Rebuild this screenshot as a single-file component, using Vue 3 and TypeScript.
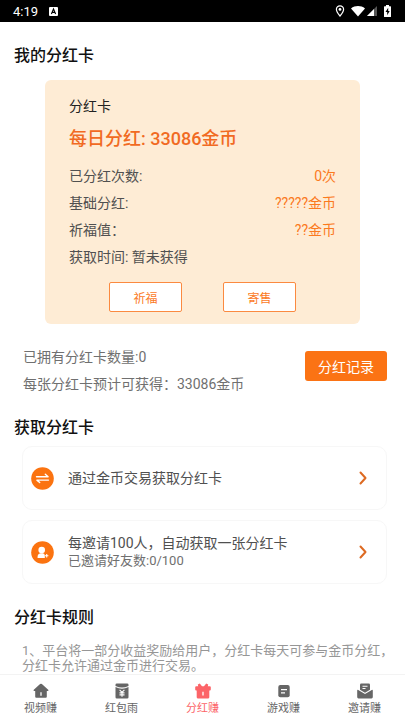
<script setup lang="ts">
import { ref } from 'vue'

interface CardRow {
  label: string
  value: string
}

interface Tab {
  id: string
  label: string
}

const rows: CardRow[] = [
  { label: '已分红次数:', value: '0次' },
  { label: '基础分红:', value: '?????金币' },
  { label: '祈福值：', value: '??金币' },
  { label: '获取时间: 暂未获得', value: '' },
]

const tabs: Tab[] = [
  { id: 'video', label: '视频赚' },
  { id: 'packet', label: '红包雨' },
  { id: 'bonus', label: '分红赚' },
  { id: 'game', label: '游戏赚' },
  { id: 'invite', label: '邀请赚' },
]

const activeTab = ref<string>('bonus')
</script>

<template>
  <div class="page">
    <header class="status">
      <span class="clock">4:19</span>
      <svg class="status-app" viewBox="0 0 9 9" width="9" height="9" aria-hidden="true">
        <rect width="9" height="9" rx="1" fill="#fff" />
        <path d="M2.4 7 4.5 2 6.6 7M3.2 5.4h2.6" fill="none" stroke="#000" stroke-width="1.1" />
      </svg>
      <div class="status-icons">
        <svg viewBox="0 0 10 12" width="10" height="12" aria-hidden="true">
          <path d="M5 .8C2.8.8 1.4 2.400 1.400 4.300 1.400 6.900 5 11 5 11s3.600-4.100 3.600-6.700C8.600 2.400 7.200.8 5 .8Z" fill="none" stroke="#fff" stroke-width="1.200" />
          <circle cx="5" cy="4.400" r="1.400" fill="#fff" />
        </svg>
        <svg class="wifi" viewBox="0 0 14 12" width="14" height="12" aria-hidden="true">
          <path d="M0 3.500C4 .3 10 .3 14 3.500L7 11.500Z" fill="#fff" />
        </svg>
        <svg class="signal" viewBox="0 0 10 10" width="10" height="10" aria-hidden="true">
          <path d="M10 0V10H0Z" fill="#555" />
          <path d="M7 3V10H0Z" fill="#fff" />
        </svg>
        <svg class="battery" viewBox="0 0 7 12" width="7" height="12" aria-hidden="true">
          <path d="M2 0h3v1.200h1.400q.6 0 .6.600v9.600q0 .6-.6.600H.6q-.6 0-.6-.6V1.800q0-.6.6-.6H2Z" fill="#fff" />
          <path d="M4.200 2.800 1.500 7h1.700v3.200L5.700 6H4.200Z" fill="#000" />
        </svg>
      </div>
    </header>

    <main class="content">
      <h2 class="heading">我的分红卡</h2>
      <section class="bonus-card">
        <h3 class="card-name">分红卡</h3>
        <p class="daily">每日分红: 33086金币</p>
        <div v-for="row in rows" :key="row.label" class="row">
          <span>{{ row.label }}</span>
          <span class="row-value">{{ row.value }}</span>
        </div>
        <div class="card-actions">
          <button type="button" class="outline-button">祈福</button>
          <button type="button" class="outline-button">寄售</button>
        </div>
      </section>

      <section class="summary">
        <div class="summary-text">
          <p>已拥有分红卡数量:0</p>
          <p>每张分红卡预计可获得：33086金币</p>
        </div>
        <button type="button" class="record-button">分红记录</button>
      </section>

      <h2 class="heading">获取分红卡</h2>
      <div class="ways">
        <a class="way" href="#trade">
          <svg class="way-icon" viewBox="0 0 23 23" width="23" height="23" aria-hidden="true">
            <circle cx="11.500" cy="11.500" r="11.300" fill="#fb7310" />
            <path d="M5.500 9.700h11.600L14.300 7.300M17.500 13.100H5.900l2.800 2.400" fill="none" stroke="#fff" stroke-width="1.400" stroke-linejoin="round" stroke-linecap="round" />
          </svg>
          <span class="way-text">
            <span class="way-title">通过金币交易获取分红卡</span>
          </span>
          <svg class="chevron" viewBox="0 0 8 14" width="8" height="14" aria-hidden="true">
            <path d="M1.500 1.500 6.500 7 1.500 12.500" fill="none" stroke="#dd6a22" stroke-width="2" stroke-linecap="round" stroke-linejoin="round" />
          </svg>
        </a>
        <a class="way" href="#invite">
          <svg class="way-icon" viewBox="0 0 23 23" width="23" height="23" aria-hidden="true">
            <circle cx="11.500" cy="11.500" r="11.300" fill="#fb7310" />
            <circle cx="10.700" cy="9" r="3.300" fill="#fff" />
            <path d="M7 17q-.5 0-.5-.6 0-3.800 3-4.200h2.400q1.900.3 1.900 2.300V17Z" fill="#fff" />
            <path d="M15.700 13v3.400M14 14.700h3.400" stroke="#fff" stroke-width="1.100" />
          </svg>
          <span class="way-text">
            <span class="way-title">每邀请100人，自动获取一张分红卡</span>
            <span class="way-note">已邀请好友数:0/100</span>
          </span>
          <svg class="chevron" viewBox="0 0 8 14" width="8" height="14" aria-hidden="true">
            <path d="M1.500 1.500 6.500 7 1.500 12.500" fill="none" stroke="#dd6a22" stroke-width="2" stroke-linecap="round" stroke-linejoin="round" />
          </svg>
        </a>
      </div>

      <h2 class="heading">分红卡规则</h2>
      <p class="rules">1、平台将一部分收益奖励给用户，分红卡每天可参与金币分红，分红卡允许通过金币进行交易。</p>
    </main>

    <nav class="tabs">
      <button
        v-for="tab in tabs"
        :key="tab.id"
        type="button"
        class="tab"
        :class="{ active: tab.id === activeTab }"
        @click="activeTab = tab.id"
      >
        <svg viewBox="0 0 16 16" width="16" height="16" aria-hidden="true">
          <template v-if="tab.id === 'video'">
            <path d="M8 .8q.5 0 .9.300l6.300 5.700q.5.500.1 1-.2.200-.7.200h-.8v5.800q0 1-1 1H3.200q-1 0-1-1V8h-.8q-.5 0-.7-.2-.4-.5.1-1l6.300-5.700q.4-.3.9-.3Z" fill="currentColor" />
            <path d="M8 9.300v3.500" stroke="#fff" stroke-width="1.300" />
          </template>
          <template v-else-if="tab.id === 'packet'">
            <path d="M2.800.5h10.400q1.300 0 1.300 1.300v1.100Q8 6.100 1.500 2.900V1.800Q1.500.5 2.800.5Z" fill="currentColor" />
            <path d="M1.500 4.100Q8 7.200 14.500 4.100v10.100q0 1.300-1.300 1.300H2.800q-1.300 0-1.300-1.300Z" fill="currentColor" />
            <path d="M5.600 6.800 8 9.300l2.400-2.500M5.500 9.900h5M5.500 11.900h5M8 9.300v4.400" fill="none" stroke="#fff" stroke-width="1.100" />
          </template>
          <template v-else-if="tab.id === 'bonus'">
            <path d="M1.200 3.300h2L2.800 1.400l2-1L7 3.300h2L11.200.4l2 1-.4 1.900h2q1 0 1 1v2.200q0 .9-.9.900h-.6v6.800q0 1.400-1.400 1.400H3.100q-1.400 0-1.400-1.400V7.400h-.6q-.9 0-.9-.9V4.300q0-1 1-1Z" fill="currentColor" />
            <path d="M8 8.800v3.700" fill="none" stroke="#fff" stroke-width="1.300" />
          </template>
          <template v-else-if="tab.id === 'game'">
            <rect x="2.300" y="2" width="11.400" height="12.300" rx="2" fill="currentColor" />
            <path d="M5 6.700h6M5 9.800h4" stroke="#fff" stroke-width="1.300" />
          </template>
          <template v-else>
            <path d="M4.300.6h7.400q1.300 0 1.300 1.300v4.900L8 9.700 3 6.800V1.900Q3 .6 4.300.6Z" fill="currentColor" />
            <path d="M5.500 3.300h5M5.500 5.500h3" stroke="#fff" stroke-width="1.100" />
            <path d="M.8 6.700 8 11.100l7.200-4.400q.6 0 .6.700v6.700q0 1.300-1.300 1.300h-13q-1.300 0-1.300-1.300V7.400q0-.7.6-.7Z" fill="currentColor" />
          </template>
        </svg>
        <span>{{ tab.label }}</span>
      </button>
    </nav>
  </div>
</template>

<style>
body {
  margin: 0;
  background: #fff;
}
</style>

<style scoped>
.page {
  display: flex;
  flex-direction: column;
  height: 100vh;
  color: #505050;
  background: #fff;
  font-family: Roboto, "Noto Sans CJK SC", sans-serif;
  font-size: 14px;
}

h2,
h3,
p {
  margin: 0;
}

button {
  padding: 0;
  font-family: inherit;
  cursor: pointer;
}

.status {
  display: flex;
  flex: none;
  align-items: center;
  height: 22px;
  padding: 0 14px 0 13px;
  color: #fff;
  background: #000;
}

.clock {
  font-size: 13px;
}

.status-app {
  margin-left: 11px;
}

.status-icons {
  display: flex;
  align-items: center;
  margin-left: auto;
}

.wifi {
  margin-left: 6px;
}

.signal {
  margin-left: 2px;
}

.battery {
  margin-left: 7px;
}

.content {
  flex: 1;
  min-height: 0;
  padding: 22px 0 2px;
  overflow-y: auto;
  scrollbar-width: none;
}

.heading {
  padding: 0 14px;
  color: #111;
  font-size: 16px;
  font-weight: 500;
  line-height: 24px;
}

.bonus-card {
  margin: 12px 45px 0;
  padding: 14px 24px 12px;
  border-radius: 6px;
  background: #feecd5;
}

.card-name {
  color: #222;
  font-size: 14px;
  font-weight: 400;
  line-height: 24px;
}

.daily {
  margin: 9px 0 12px;
  color: #f16a22;
  font-size: 18px;
  font-weight: 500;
  line-height: 24px;
}

.row {
  display: flex;
  justify-content: space-between;
  line-height: 27px;
}

.row-value {
  color: #fb7a1e;
}

.card-actions {
  display: flex;
  justify-content: center;
  gap: 41px;
  margin-top: 11px;
}

.outline-button {
  width: 73px;
  height: 30px;
  border: 1px solid #fb8a40;
  border-radius: 2px;
  color: #fb7a1e;
  background: #fff;
  font-size: 12px;
}

.summary {
  display: flex;
  align-items: flex-start;
  justify-content: space-between;
  margin: 20px 18px 18px 23px;
}

.summary-text {
  color: #707070;
  line-height: 27px;
}

.record-button {
  height: 30px;
  margin-top: 7px;
  padding: 0 13px;
  border: 0;
  border-radius: 3px;
  color: #fff;
  background: #fb7314;
  font-size: 14px;
}

.ways {
  display: flex;
  flex-direction: column;
  gap: 10px;
  margin: 6px 18px 22px 22px;
}

.way {
  display: flex;
  align-items: center;
  box-sizing: border-box;
  min-height: 64px;
  padding: 0 19px 0 8px;
  border: 1px solid #f7f7f7;
  border-radius: 10px;
  color: #505050;
  text-decoration: none;
}

.way-icon,
.chevron {
  flex: none;
}

.way-text {
  display: flex;
  flex: 1;
  flex-direction: column;
  margin-left: 14px;
}

.way-title {
  font-size: 14px;
  line-height: 18px;
}

.way-note {
  color: #707070;
  font-size: 13px;
  line-height: 18px;
}

.rules {
  margin: 13px 10px 0 22px;
  color: #969696;
  font-size: 13px;
  line-height: 15px;
}

.tabs {
  display: grid;
  flex: none;
  grid-template-columns: repeat(5, 1fr);
  height: 45px;
  border-top: 1px solid #f3f3f3;
  background: #fff;
}

.tab {
  display: flex;
  flex-direction: column;
  gap: 1px;
  align-items: center;
  padding-top: 8px;
  border: 0;
  color: #666;
  background: none;
  font-size: 11px;
  line-height: 18px;
}

.tab svg {
  flex: none;
}

.tab.active {
  color: #fc6468;
}
</style>
